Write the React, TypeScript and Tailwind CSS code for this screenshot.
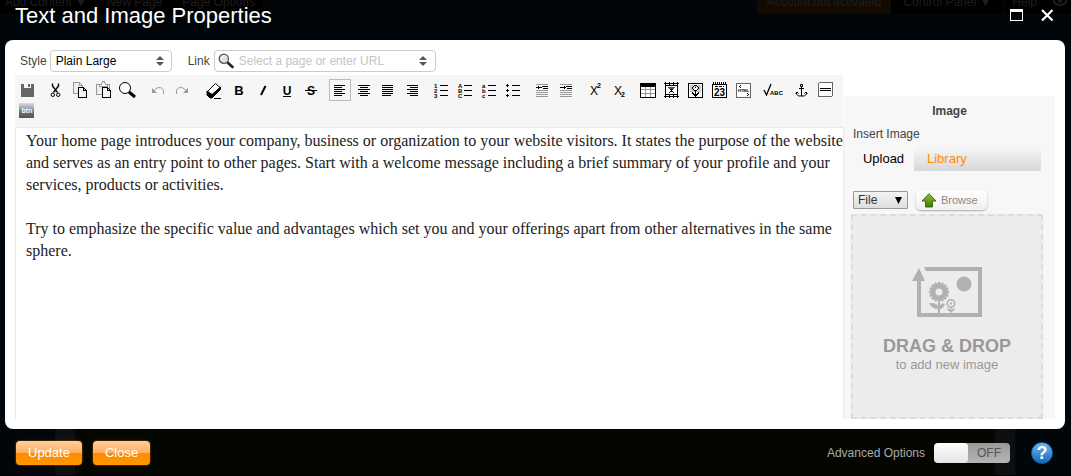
import type { ReactNode } from 'react';
import clsx from 'clsx';

type Tool = { name: string; icon: ReactNode; active?: boolean; wide?: boolean };

const ListIcon = ({ marks }: { marks: string[] }) => (
  <>
    <path d="M11 6.5h8M11 11.5h8M11 16.5h8" />
    {marks.map((mark, i) => (
      <text key={mark + i} x="5" y={9 + i * 5} fontSize="6" fontWeight="bold" fill="currentColor" stroke="none">{mark}</text>
    ))}
  </>
);

const bulletIcon = (
  <path d="M11 6.5h8M11 11.5h8M11 16.5h8M5 6.5h3M6.5 5v3M5 11.5h3M6.5 10v3M5 16.5h3M6.5 15v3" />
);

const Letter = ({ children, size = 13 }: { children: ReactNode; size?: number }) => (
  <text x="12" y="16" textAnchor="middle" fontSize={size} fontWeight="bold" fill="currentColor" stroke="none">{children}</text>
);

const toolGroups: Tool[][] = [
  [
    {
      name: 'Save',
      icon: <path fill="#666" stroke="none" d="M6 5h3v4h7V5h2l1 1v12H6zM13 5h2v3h-2z" />,
    },
  ],
  [
    {
      name: 'Cut',
      icon: (
        <g shapeRendering="auto">
          <path strokeWidth="1.4" d="M8.500 4.500V7l5 6.500M14.500 4.500V7l-5 6.500" />
          <circle cx="8.800" cy="15.800" r="1.700" />
          <circle cx="14.200" cy="15.800" r="1.700" />
        </g>
      ),
    },
    {
      name: 'Copy',
      icon: (
        <>
          <path stroke="#999" fill="#eee" d="M5.500 3.500h6l3 3v8h-9zM11.500 3.500v3h3" />
          <path fill="#f4f4f4" d="M10.500 8.500h5l3 3v6.500h-8zM15.500 8.500v3h3" />
        </>
      ),
    },
    {
      name: 'Paste',
      icon: (
        <>
          <path stroke="#999" fill="#eee" d="M4.500 5.500h13v10h-13z" />
          <path stroke="#999" fill="#f7f7f7" d="M7.500 7.500v-2h2l1-3h2l1 3h2v2z" />
          <path fill="#f4f4f4" d="M10.500 8.500h5l3 3v6.500h-8zM15.500 8.500v3h3" />
        </>
      ),
    },
    {
      name: 'Find',
      icon: (
        <g shapeRendering="auto">
          <circle cx="9" cy="9" r="5.500" fill="#fff" />
          <path strokeWidth="3" d="M13 13l6 5" />
        </g>
      ),
    },
  ],
  [
    {
      name: 'Undo',
      icon: (
        <g stroke="#999" shapeRendering="auto">
          <path d="M9 12c2-4 8-5 9.500-.500V15" />
          <path fill="#999" stroke="none" d="M7 9v5h5z" />
        </g>
      ),
    },
    {
      name: 'Redo',
      icon: (
        <g stroke="#999" shapeRendering="auto">
          <path d="M17 12c-2-4-8-5-9.500-.500V15" />
          <path fill="#999" stroke="none" d="M19 9v5h-5z" />
        </g>
      ),
    },
  ],
  [
    {
      name: 'Remove formatting',
      wide: true,
      icon: (
        <g shapeRendering="auto">
          <path fill="#fff" d="M6 13l8.500-8.500L19.500 9 11 18z" />
          <path fill="#000" d="M6 12l5 3.500V19H9l-3-3zM11 15.500L19.500 8v2.500L11 19z" />
          <path shapeRendering="crispEdges" d="M13 19.500h7" />
        </g>
      ),
    },
    { name: 'Bold', icon: <Letter>B</Letter> },
    { name: 'Italic', icon: <path shapeRendering="auto" strokeWidth="2" d="M14.500 7L10 16" /> },
    {
      name: 'Underline',
      icon: (
        <>
          <Letter size={12}>U</Letter>
          <path d="M8 17.500h8" />
        </>
      ),
    },
    {
      name: 'Strikethrough',
      icon: (
        <>
          <Letter size={12}>S</Letter>
          <path d="M6 11.500h12" />
        </>
      ),
    },
  ],
  [
    { name: 'Align left', active: true, icon: <path d="M6 6.500h11M6 8.500h8M6 10.500h11M6 12.500h8M6 14.500h11M6 16.500h8" /> },
    { name: 'Align center', icon: <path d="M6 6.500h12M8 8.500h8M6 10.500h12M8 12.500h8M6 14.500h12M8 16.500h8" /> },
    { name: 'Justify', icon: <path d="M6 6.500h11M6 8.500h11M6 10.500h11M6 12.500h11M6 14.500h11M6 16.500h9" /> },
    { name: 'Align right', icon: <path d="M7 6.500h11M10 8.500h8M7 10.500h11M10 12.500h8M7 14.500h11M10 16.500h8" /> },
  ],
  [
    { name: 'Numbered list', icon: <ListIcon marks={['1', '2', '3']} /> },
    { name: 'Upper case list', icon: <ListIcon marks={['A', 'B', 'C']} /> },
    { name: 'Lower case list', icon: <ListIcon marks={['a', 'b', 'c']} /> },
    { name: 'Bulleted list', icon: bulletIcon },
  ],
  [
    {
      name: 'Outdent',
      icon: (
        <>
          <path stroke="#999" d="M6 5.500h12M6 11.500h12M6 13.500h12M6 15.500h12M6 17.500h12" />
          <path d="M6 8.500h6M12 7.500h6M13 9.500h5M8.500 7v3" />
        </>
      ),
    },
    {
      name: 'Indent',
      icon: (
        <>
          <path stroke="#999" d="M6 5.500h12M6 11.500h12M6 13.500h12M6 15.500h12M6 17.500h12" />
          <path d="M6 8.500h6M12 7.500h6M13 9.500h5M10.500 7v3" />
        </>
      ),
    },
  ],
  [
    {
      name: 'Superscript',
      icon: (
        <g fill="currentColor" stroke="none">
          <text x="7" y="16" fontSize="12">X</text>
          <text x="14" y="9" fontSize="7" fontWeight="bold">2</text>
        </g>
      ),
    },
    {
      name: 'Subscript',
      icon: (
        <g fill="currentColor" stroke="none">
          <text x="7" y="16" fontSize="12">X</text>
          <text x="14" y="18" fontSize="7" fontWeight="bold">2</text>
        </g>
      ),
    },
  ],
  [
    {
      name: 'Insert table',
      icon: (
        <>
          <path fill="#fff" d="M4.500 4.500h15v14h-15z" />
          <path stroke="#999" d="M5 10.500h14M5 14.500h14M9.500 8v10M14.500 8v10" />
          <path strokeWidth="3" d="M4 6h16" />
        </>
      ),
    },
    {
      name: 'Insert media',
      icon: (
        <>
          <path fill="#fff" d="M5.500 6.500h12v9h-12z" />
          <path d="M4 4.500h15M4 17.500h15" />
          <path strokeDasharray="1 3" d="M5 5.500h14M5 16.500h14M5 3.500h14M5 18.500h14" />
          <path stroke="#555" d="M8 8.500h7M9 9.500h5" />
          <path d="M10 10.500h3M11 11.500h1M10 12.500h3M9 13.500h1M13 13.500h1" />
        </>
      ),
    },
    {
      name: 'Insert image',
      icon: (
        <>
          <path fill="#fff" d="M4.500 4.500h14v14h-14z" />
          <path fill="#ccc" stroke="none" d="M6 6h11v7H6z" />
          <path d="M10 6.500h3M9 7.500h1M13 7.500h1M8 8.500h1M14 8.500h1M8 9.500h1M14 9.500h1M9 10.500h1M13 10.500h1M10 11.500h3" />
          <path stroke="#fff" strokeWidth="3" d="M10 9h3" />
          <path d="M11 8.500h1M11.500 12v6M8 13.500h1M14 13.500h1M8 14.500h2M13 14.500h2M9 15.500h5M10 16.500h3" />
        </>
      ),
    },
    {
      name: 'Insert calendar',
      icon: (
        <>
          <path fill="#fff" d="M4.500 5.500h14v13h-14z" />
          <path strokeWidth="2" strokeDasharray="1 1" d="M5 4h14" />
          <path strokeDasharray="3 1" d="M7 7.500h9" />
          <text x="6" y="17" fontSize="10" fontWeight="bold" fill="currentColor" stroke="none">23</text>
        </>
      ),
    },
    {
      name: 'Insert HTML',
      icon: (
        <>
          <path fill="#fff" stroke="#666" d="M4.500 4.500h14v14h-14z" />
          <path d="M8 6.500h1M7 7.500h1M8 8.500h1M15 14.500h1M16 15.500h1M15 16.500h1" />
          <text x="6" y="13" fontSize="4" fontWeight="bold" fill="currentColor" stroke="none">HTML</text>
        </>
      ),
    },
  ],
  [
    {
      name: 'Check spelling',
      icon: (
        <>
          <path shapeRendering="auto" d="M3 11l2.500 5L10 5" strokeWidth="1.300" />
          <text x="9" y="16" fontSize="6" fontWeight="bold" fill="currentColor" stroke="none">ABC</text>
        </>
      ),
    },
  ],
  [
    {
      name: 'Insert anchor',
      icon: (
        <g shapeRendering="auto">
          <path fill="#f6f6f6" d="M10.500 5.500h2v2h-2z" />
          <path d="M11.500 8v9M9 9.500h5M6.500 13v2l2 2h6l2-2v-2M5.500 14.500l1.500-1.500 1.500 1.500M14.500 14.500l1.500-1.500 1.500 1.500" />
        </g>
      ),
    },
    {
      name: 'Horizontal line',
      icon: (
        <>
          <rect x="4.500" y="3.500" width="14" height="14" rx="1.500" fill="#fff" stroke="#666" />
          <path d="M6 9.500h11M6 11.500h11" />
        </>
      ),
    },
  ],
  [
    {
      name: 'Insert button',
      icon: (
        <>
          <defs>
            <linearGradient id="btnFill" x2="0" y2="1">
              <stop offset="0" stopColor="#ddd" />
              <stop offset="0.5" stopColor="#888" />
              <stop offset="0.5" stopColor="#777" />
              <stop offset="1" stopColor="#555" />
            </linearGradient>
          </defs>
          <rect x="4" y="3" width="15" height="15" rx="1" fill="url(#btnFill)" stroke="none" />
          <text x="12" y="13" textAnchor="middle" fontSize="7" fontWeight="bold" fill="#fff" stroke="none">btn</text>
        </>
      ),
    },
  ],
];

const UpDown = ({ className }: { className?: string }) => (
  <svg viewBox="0 0 8 10" className={clsx('w-2 h-[10px] shrink-0 pointer-events-none', className)} fill="#555">
    <path d="M4 0l4 4H0zM4 10l4-4H0z" />
  </svg>
);

const ToolButton = ({ tool }: { tool: Tool }) => (
  <div className={clsx('flex items-center justify-center h-[22px]', tool.wide ? 'w-[29px]' : 'w-6')}>
    <button
      type="button"
      aria-label={tool.name}
      className={clsx('flex items-center justify-center size-[22px]', tool.active && 'outline outline-1 -outline-offset-1 outline-[#bbb]')}
    >
      <svg viewBox="0 0 24 22" className="w-6 h-[22px] shrink-0" fill="none" stroke="currentColor" shapeRendering="crispEdges">
        {tool.icon}
      </svg>
    </button>
  </div>
);

const Backdrop = () => (
  <div className="absolute inset-0 overflow-hidden text-xs text-[#1e1e1e]" aria-hidden="true">
    {/* dimmed site menu */}
    <div className="flex justify-between h-[14px]">
      <div className="flex gap-5 pl-[5px] pr-2 bg-black leading-1">
        <span>Add Content ▼</span>
        <span>New Page</span>
        <span>Page Options</span>
      </div>
      <div className="flex bg-black leading-1">
        <span className="bg-[#130b00] px-[10px]">Account not activated</span>
        <span className="px-3">Control Panel ▼</span>
        <span className="px-2 border-l border-[#0a0a0a]">Help</span>
        <svg viewBox="0 0 14 10" className="w-[14px] h-[10px] ml-2 mr-1 -mt-1" fill="none" stroke="#1e1e1e" strokeWidth="2">
          <ellipse cx="7" cy="5" rx="6" ry="4" />
          <circle cx="7" cy="5" r="1" />
        </svg>
      </div>
    </div>
    {/* dimmed page body */}
    <div className="absolute bottom-px left-[55px] right-14 h-[46px] border-x-[20px] border-[#0e0f10] bg-[#040600]" />
    <div className="absolute bottom-0 inset-x-0 h-px bg-black" />
  </div>
);

const Header = () => (
  <header className="flex items-start justify-between h-10 pl-[15px] pr-[17px] pt-[3px]">
    <h1 className="text-[22px] leading-[26px] text-white">Text and Image Properties</h1>
    <div className="flex items-center gap-[17px] h-6 text-white">
      <button type="button" aria-label="Maximize">
        <svg viewBox="0 0 14 12" className="w-[14px] h-3" fill="none" stroke="currentColor" shapeRendering="crispEdges">
          <path d="M.5 .5h12v11H.5z" />
          <path d="M0 1.500h13" strokeWidth="3" />
        </svg>
      </button>
      <button type="button" aria-label="Close window">
        <svg viewBox="0 0 13 12" className="w-[13px] h-3" stroke="currentColor" strokeWidth="2.200">
          <path d="M1 1l10.500 10.500M11.500 1L1 11.500" />
        </svg>
      </button>
    </div>
  </header>
);

const StyleBar = () => (
  <div className="flex items-center h-[22px] mb-[3px] pl-[5px] text-xs text-[#444]">
    <label htmlFor="style" className="mr-[3px]">Style</label>
    <div className="relative flex items-center w-[122px] h-[22px] mr-4">
      <select id="style" className="appearance-none size-full pl-[5px] border border-[#ccc] rounded-[4px] bg-white text-black">
        <option>Plain Large</option>
      </select>
      <UpDown className="absolute right-2" />
    </div>
    <label htmlFor="link" className="mr-1">Link</label>
    <div className="flex items-center w-[222px] h-[22px] pl-[3px] pr-2 border border-[#ccc] rounded-[4px] bg-white">
      <svg viewBox="0 0 16 16" className="size-4 shrink-0 mr-[5px]" fill="none">
        <path d="M9 9l5.500 5" stroke="#222" strokeWidth="2.600" strokeLinecap="round" />
        <circle cx="5.800" cy="5.800" r="4.600" fill="#dde2e4" stroke="#555" strokeWidth="1.300" />
        <path d="M3.500 6a2.500 2.500 0 0 1 2.500-2.500" stroke="#fff" />
      </svg>
      <input id="link" type="text" placeholder="Select a page or enter URL" className="flex-1 min-w-0 outline-none placeholder:text-[#c4c4c4]" />
      <UpDown />
    </div>
  </div>
);

const Editor = () => (
  <section className="flex flex-col flex-1 min-w-0">
    <div className="flex flex-wrap content-start gap-x-[5px] h-[52px] mr-px pt-1 bg-[#f6f6f6] text-black">
      {toolGroups.map((group) => (
        <div key={group[0].name} className="flex h-[21px]">
          {group.map((tool) => (
            <ToolButton key={tool.name} tool={tool} />
          ))}
        </div>
      ))}
    </div>
    <div
      contentEditable
      suppressContentEditableWarning
      role="textbox"
      aria-label="Text"
      className="flex-1 pl-[10px] pt-[2px] border border-b-0 border-[#ecebdc] font-['Liberation_Serif',serif] text-base leading-[22px] text-[#222] outline-none"
    >
      <p className="mb-[22px] -mr-1">
        Your home page introduces your company, business or organization to your website visitors. It states the purpose of the website and serves as an entry point to other pages. Start with a welcome message including a brief summary of your profile and your services, products or activities.
      </p>
      <p className="-mr-1">
        Try to emphasize the specific value and advantages which set you and your offerings apart from other alternatives in the same sphere.
      </p>
    </div>
  </section>
);

const petals = Array.from({ length: 16 }, (_, i) => i * 22.5);

const PictureIcon = () => (
  <svg viewBox="0 0 70 50" className="w-[70px] h-[50px]" fill="#b1b1b1">
    <path d="M12 0h58v50H5V14H0L7 1l6 13H9v32h57V4H14z" />
    <circle cx="52" cy="17" r="7.500" />
    <circle cx="27" cy="25" r="6" fill="none" stroke="#b1b1b1" strokeWidth="5" />
    {petals.map((angle) => (
      <circle key={angle} cx="27" cy="16.200" r="1.400" transform={`rotate(${angle} 27 25)`} />
    ))}
    <path d="M26 33h2v5c1-1 3-2 5-1-1 3-3 5-5 5v4h-2v-4c-4 0-7-2-9-6 4 0 7 0 9 3z" />
    <circle cx="39" cy="36.500" r="3.700" fill="none" stroke="#b1b1b1" strokeWidth="1.600" />
    <circle cx="39" cy="36.500" r="1.200" />
    <path d="M38.500 40.500h1V43c1-1 2-1.500 3.500-1.500-.5 2-2 3-3.500 3.200V46h-1v-1.300c-1.500-.2-3-1.200-3.500-3.200 1.500 0 2.500.5 3.500 1.500z" />
  </svg>
);

const ImagePanel = () => (
  <aside className="flex flex-col w-[211px] mt-[21px] px-2 pt-1 bg-[#f7f7f7] text-xs text-[#444]">
    <h2 className="text-center font-bold leading-[22px]">Image</h2>
    <p className="pl-px leading-6">Insert Image</p>
    <div className="flex h-6 mt-px ml-px mr-[6px] text-[13px]">
      <button type="button" className="w-[61px] text-black">Upload</button>
      <button type="button" className="flex-1 pl-[13px] text-left text-[#ff8c00] bg-linear-to-b from-[#f7f7f7] to-[#d7d7d7]">Library</button>
    </div>
    <div className="flex items-center gap-2 h-[22px] mt-[18px] ml-px">
      <div className="relative flex items-center w-[55px] h-[18px]">
        <select aria-label="Source" className="appearance-none size-full pl-1 border border-[#999] rounded-[1px] bg-linear-to-b from-[#f4f4f4] to-[#dedede] text-[#333]">
          <option>File</option>
        </select>
        <svg viewBox="0 0 7 7" className="absolute right-[6px] size-[7px] pointer-events-none" fill="#000">
          <path d="M0 0h7L3.500 7z" />
        </svg>
      </div>
      <button type="button" className="flex items-center gap-1 h-5 pl-[5px] pr-[9px] rounded-[5px] bg-linear-to-b from-white to-[#f0f0f0] text-[11px] text-[#888] shadow-[0_1px_2px_#aaa]">
        <svg viewBox="0 0 16 15" className="w-4 h-[15px]">
          <defs>
            <linearGradient id="arrowFill" x2="0" y2="1">
              <stop offset="0" stopColor="#8fbf3c" />
              <stop offset="1" stopColor="#3f7a00" />
            </linearGradient>
          </defs>
          <path d="M8 .7L15 8h-3.500v6h-7V8H1z" fill="url(#arrowFill)" stroke="#3f6b0c" />
        </svg>
        Browse
      </button>
    </div>
    <div className="flex flex-col items-center mt-[3px] mr-1 -ml-px pt-[51px] pb-11 border-2 border-dashed border-[#dcdcdc] bg-[#ececec] text-[#999]">
      <PictureIcon />
      <p className="mt-[18px] text-lg leading-[22px] font-bold">DRAG &amp; DROP</p>
      <p className="text-[13px] leading-4">to add new image</p>
    </div>
  </aside>
);

const orangeButton =
  'h-6 px-3 rounded-[4px] text-[13px] text-white bg-[linear-gradient(#ffd0a0,#ffad5c_50%,#ff8a00_50%,#ff9800)] shadow-[0_0_2px_#c66a00]';

const Footer = () => (
  <footer className="flex items-center justify-between h-[47px] pl-4 pr-[18px]">
    <div className="flex gap-[11px]">
      <button type="button" className={orangeButton}>Update</button>
      <button type="button" className={orangeButton}>Close</button>
    </div>
    <div className="flex items-center text-xs text-[#aaa]">
      <label htmlFor="advanced" className="mr-[9px]">Advanced Options</label>
      <button id="advanced" type="button" role="switch" aria-checked="false" className="flex items-center w-[76px] h-5 mr-[21px] rounded-[4px] overflow-hidden bg-linear-to-b from-[#999] to-[#b5b5b5] text-[#555]">
        <span className="w-[34px] h-full rounded-[4px] bg-linear-to-b from-white to-[#e4e4e4]" />
        <span className="flex-1">OFF</span>
      </button>
      <button type="button" aria-label="Help" className="size-[22px] rounded-full border border-[#0d64ae] bg-linear-to-b from-[#72b6ee] to-[#0a68bd] text-lg leading-5 font-bold text-white">?</button>
    </div>
  </footer>
);

const App = () => {
  return (
    <div className="relative min-h-screen bg-[#00060a] font-['Liberation_Sans',Arial,sans-serif]">
      <Backdrop />
      <div className="relative flex flex-col min-h-screen">
        <Header />
        <main className="flex flex-col flex-1 ml-[5px] mr-[6px] p-[10px] rounded-lg bg-white">
          <StyleBar />
          <div className="flex flex-1">
            <Editor />
            <ImagePanel />
          </div>
        </main>
        <Footer />
      </div>
    </div>
  );
};

export default App;
